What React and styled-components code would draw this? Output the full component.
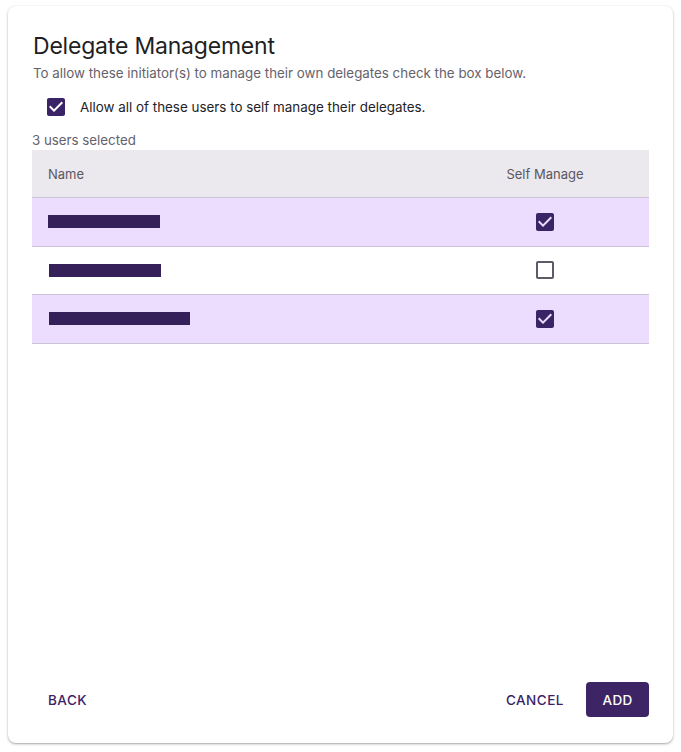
import React, { useState } from 'react'
import styled, { createGlobalStyle } from 'styled-components'

const GlobalStyle = createGlobalStyle`
    html, body {
        margin: 0;
        padding: 0;
        background: #ffffff;
    }
    body {
        padding: 6px 8px 9px;
        font-family: Inter, "Liberation Sans", sans-serif;
    }
`

const users = [
    { id: 1, nameWidth: 112, offset: 16, selfManage: true },
    { id: 2, nameWidth: 112, offset: 17, selfManage: false },
    { id: 3, nameWidth: 141, offset: 17, selfManage: true },
]

function CheckIcon({ checked }) {
    return checked ? (
        <svg width="24" height="24" viewBox="0 0 24 24">
            <path
                fill="#3b2466"
                d="M19 3H5c-1.11 0-2 .9-2 2v14c0 1.1.89 2 2 2h14c1.11 0 2-.9 2-2V5c0-1.1-.89-2-2-2zm-9 14l-5-5 1.41-1.41L10 14.17l7.59-7.59L19 8l-9 9z"
            />
        </svg>
    ) : (
        <svg width="24" height="24" viewBox="0 0 24 24">
            <path
                fill="#5f5a66"
                d="M19 5v14H5V5h14m0-2H5c-1.1 0-2 .9-2 2v14c0 1.1.9 2 2 2h14c1.1 0 2-.9 2-2V5c0-1.1-.9-2-2-2z"
            />
        </svg>
    )
}

function DelegateManagement() {
    const [all, setAll] = useState(true)
    const [rows, setRows] = useState(users)

    const toggle = (id) => {
        setRows(rows.map((r) => (r.id === id ? { ...r, selfManage: !r.selfManage } : r)))
    }

    return (
        <Card>
            <Content>
                <Title>Delegate Management</Title>
                <Subtitle>To allow these initiator(s) to manage their own delegates check the box below.</Subtitle>
                <CheckRow onClick={() => setAll(!all)}>
                    <IconBox>
                        <CheckIcon checked={all} />
                    </IconBox>
                    <CheckLabel>Allow all of these users to self manage their delegates.</CheckLabel>
                </CheckRow>
                <Count>3 users selected</Count>
                <Table>
                    <HeadRow>
                        <HeadCell>Name</HeadCell>
                        <HeadCell center>Self Manage</HeadCell>
                    </HeadRow>
                    {rows.map((r) => (
                        <Row key={r.id} highlight={r.selfManage}>
                            <Cell>
                                <Redacted style={{ width: r.nameWidth, marginLeft: r.offset - 16 }} />
                            </Cell>
                            <Cell center>
                                <IconBox onClick={() => toggle(r.id)}>
                                    <CheckIcon checked={r.selfManage} />
                                </IconBox>
                            </Cell>
                        </Row>
                    ))}
                </Table>
            </Content>
            <Footer>
                <TextButton>BACK</TextButton>
                <Actions>
                    <TextButton>CANCEL</TextButton>
                    <FilledButton>ADD</FilledButton>
                </Actions>
            </Footer>
        </Card>
    )
}

export default function App() {
    return (
        <>
            <GlobalStyle />
            <DelegateManagement />
        </>
    )
}

const Card = styled.div`
    height: 737px;
    box-sizing: border-box;
    background: #fff;
    border-radius: 8px;
    box-shadow: 0 1px 3px rgba(0, 0, 0, 0.28), 0 1px 1px rgba(0, 0, 0, 0.1);
    display: flex;
    flex-direction: column;
    justify-content: space-between;
`

const Content = styled.div`
    padding: 24px 24px 0;
`

const Title = styled.h2`
    margin: 0 0 0 1px;
    font-size: 23px;
    line-height: 32px;
    font-weight: 400;
    color: #1f1f1f;
    letter-spacing: -0.2px;
`

const Subtitle = styled.p`
    margin: 1px 0 0 1px;
    font-size: 13.35px;
    line-height: 20px;
    color: #66626b;
`

const CheckRow = styled.div`
    display: flex;
    align-items: center;
    gap: 12px;
    margin: 12px 0 0 12px;
    cursor: pointer;
`

const IconBox = styled.span`
    display: inline-flex;
    width: 24px;
    height: 24px;
    cursor: pointer;
`

const CheckLabel = styled.span`
    font-size: 13.4px;
    line-height: 24px;
    color: #242226;
`

const Count = styled.div`
    margin-top: 12px;
    font-size: 13.3px;
    line-height: 18px;
    color: #66626b;
`

const Table = styled.div`
    margin-top: 1px;
    display: flex;
    flex-direction: column;
`

const HeadRow = styled.div`
    display: grid;
    grid-template-columns: 1fr 208px;
    height: 47px;
    align-items: center;
    background: #ebe8ee;
    border-bottom: 1px solid #cbc3d6;
`

const HeadCell = styled.div`
    padding-left: ${(p) => (p.center ? '0' : '16px')};
    text-align: ${(p) => (p.center ? 'center' : 'left')};
    font-size: 13px;
    color: #5b5760;
`

const Row = styled.div`
    display: grid;
    grid-template-columns: 1fr 208px;
    height: 48.5px;
    box-sizing: border-box;
    align-items: center;
    background: ${(p) => (p.highlight ? '#ecdcfd' : '#ffffff')};
    border-bottom: 1px solid #cbc3d6;
`

const Cell = styled.div`
    display: flex;
    align-items: center;
    justify-content: ${(p) => (p.center ? 'center' : 'flex-start')};
    padding-left: ${(p) => (p.center ? '0' : '16px')};
`

const Redacted = styled.span`
    display: block;
    height: 13px;
    background: #35205a;
`

const Footer = styled.div`
    display: flex;
    align-items: center;
    justify-content: space-between;
    padding: 0 24px 26px;
`

const Actions = styled.div`
    display: flex;
    align-items: center;
    gap: 6px;
`

const TextButton = styled.button`
    border: none;
    background: transparent;
    padding: 9px 16px;
    font-family: inherit;
    font-size: 13.5px;
    font-weight: 500;
    letter-spacing: 0.5px;
    color: #3b2466;
    cursor: pointer;
`

const FilledButton = styled.button`
    border: none;
    min-width: 63px;
    height: 35px;
    padding: 0 16px;
    border-radius: 4px;
    background: #3d2565;
    color: #fff;
    font-family: inherit;
    font-size: 13.5px;
    font-weight: 500;
    letter-spacing: 0.3px;
    cursor: pointer;
`
